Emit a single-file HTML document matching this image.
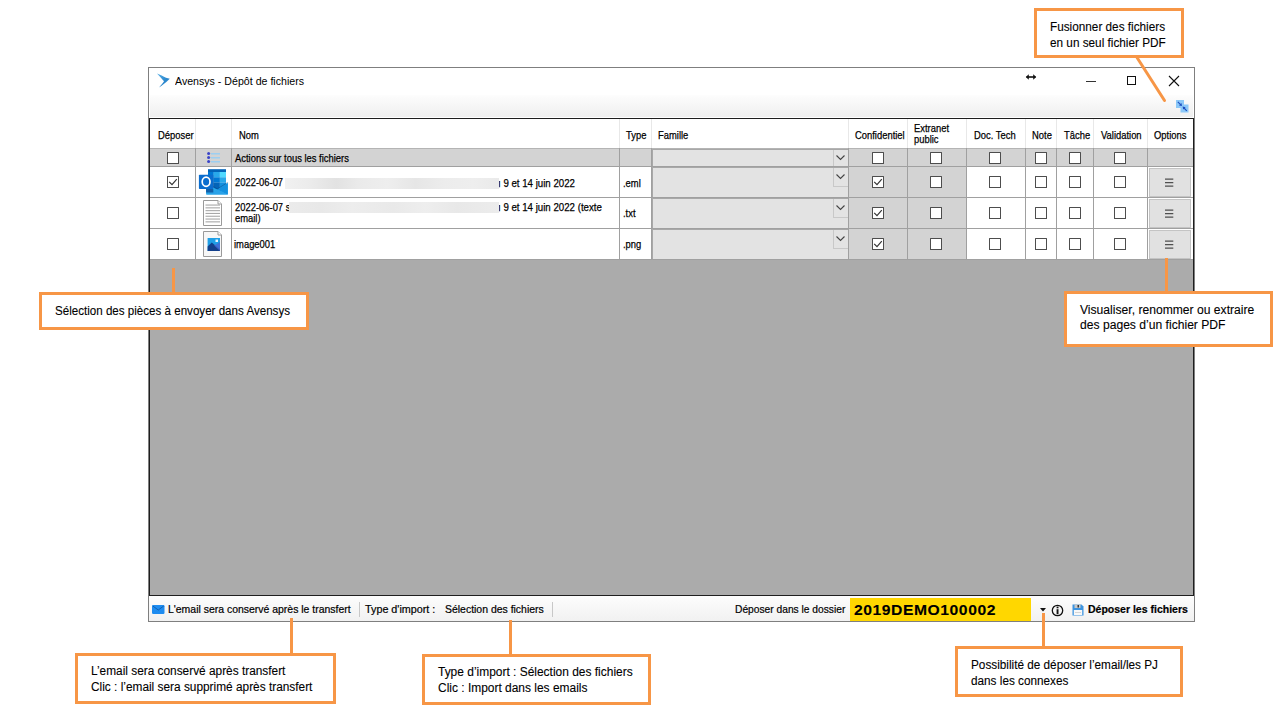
<!DOCTYPE html><html><head><meta charset="utf-8"><style>
*{margin:0;padding:0;box-sizing:border-box}
html,body{width:1279px;height:711px;overflow:hidden;background:#fff;font-family:"Liberation Sans",sans-serif;color:#000}
.ab{position:absolute}
.t{position:absolute;white-space:nowrap;transform-origin:0 0;line-height:1}
.g{font-size:11px;color:#000}
.cb{position:absolute;width:12px;height:12px;border:1px solid #4d4d4d;border-radius:0.5px;background:#fff}
.ob{position:absolute;border:3px solid #f79646;background:#fff}
.ol{position:absolute;background:#f79646}
.an{position:absolute;white-space:nowrap;font-size:12px;line-height:16px;color:#000;-webkit-text-stroke:0.1px #000}
</style></head><body>

<div class="ab" style="left:148px;top:67px;width:1047px;height:555px;border:1px solid #7f7f7f;background:#fff"></div>
<div class="ab" style="left:150px;top:95px;width:1043px;height:22px;background:linear-gradient(#fdfdfd,#efefef)"></div>
<div class="ab" style="left:149px;top:118px;width:1045px;height:478px;border:1px solid #1e1e1e;background:#ababab"></div>
<div class="ab" style="left:150px;top:119px;width:1043px;height:29px;background:#fff"></div>
<div class="ab" style="left:150px;top:148px;width:1043px;height:1px;background:#b4b4b4"></div>
<div class="ab" style="left:150px;top:149px;width:1043px;height:17px;background:#d3d3d3"></div>
<div class="ab" style="left:150px;top:166px;width:1043px;height:1px;background:#a0a0a0"></div>
<div class="ab" style="left:150px;top:167px;width:1043px;height:30px;background:#fff"></div>
<div class="ab" style="left:150px;top:197px;width:1043px;height:1px;background:#a0a0a0"></div>
<div class="ab" style="left:150px;top:198px;width:1043px;height:30px;background:#fff"></div>
<div class="ab" style="left:150px;top:228px;width:1043px;height:1px;background:#a0a0a0"></div>
<div class="ab" style="left:150px;top:229px;width:1043px;height:30px;background:#fff"></div>
<div class="ab" style="left:150px;top:259px;width:1043px;height:1px;background:#a0a0a0"></div>
<div class="ab" style="left:849px;top:167px;width:117px;height:30px;background:#d3d3d3"></div>
<div class="ab" style="left:849px;top:198px;width:117px;height:30px;background:#d3d3d3"></div>
<div class="ab" style="left:849px;top:229px;width:117px;height:30px;background:#d3d3d3"></div>
<div class="ab" style="left:195px;top:119px;width:1px;height:29px;background:#e8e8e8"></div>
<div class="ab" style="left:195px;top:148px;width:1px;height:112px;background:#a0a0a0"></div>
<div class="ab" style="left:231px;top:119px;width:1px;height:29px;background:#e8e8e8"></div>
<div class="ab" style="left:231px;top:148px;width:1px;height:112px;background:#a0a0a0"></div>
<div class="ab" style="left:619px;top:119px;width:1px;height:29px;background:#e8e8e8"></div>
<div class="ab" style="left:619px;top:148px;width:1px;height:112px;background:#a0a0a0"></div>
<div class="ab" style="left:651px;top:119px;width:1px;height:29px;background:#e8e8e8"></div>
<div class="ab" style="left:651px;top:148px;width:1px;height:112px;background:#a0a0a0"></div>
<div class="ab" style="left:848px;top:119px;width:1px;height:29px;background:#e8e8e8"></div>
<div class="ab" style="left:848px;top:148px;width:1px;height:112px;background:#a0a0a0"></div>
<div class="ab" style="left:907px;top:119px;width:1px;height:29px;background:#e8e8e8"></div>
<div class="ab" style="left:907px;top:148px;width:1px;height:112px;background:#a0a0a0"></div>
<div class="ab" style="left:966px;top:119px;width:1px;height:29px;background:#e8e8e8"></div>
<div class="ab" style="left:966px;top:148px;width:1px;height:112px;background:#a0a0a0"></div>
<div class="ab" style="left:1025px;top:119px;width:1px;height:29px;background:#e8e8e8"></div>
<div class="ab" style="left:1025px;top:148px;width:1px;height:112px;background:#a0a0a0"></div>
<div class="ab" style="left:1056px;top:119px;width:1px;height:29px;background:#e8e8e8"></div>
<div class="ab" style="left:1056px;top:148px;width:1px;height:112px;background:#a0a0a0"></div>
<div class="ab" style="left:1093px;top:119px;width:1px;height:29px;background:#e8e8e8"></div>
<div class="ab" style="left:1093px;top:148px;width:1px;height:112px;background:#a0a0a0"></div>
<div class="ab" style="left:1147px;top:119px;width:1px;height:29px;background:#e8e8e8"></div>
<div class="ab" style="left:1147px;top:148px;width:1px;height:112px;background:#a0a0a0"></div>
<div class="ab" style="left:652px;top:149px;width:196px;height:17px;background:#e3e3e3;border-top:1px solid #a8a8a8;border-left:1px solid #a8a8a8"></div>
<div class="ab" style="left:652px;top:167px;width:196px;height:30px;background:#e3e3e3;border-top:1px solid #a8a8a8;border-left:1px solid #a8a8a8"></div>
<div class="ab" style="left:652px;top:198px;width:196px;height:30px;background:#e3e3e3;border-top:1px solid #a8a8a8;border-left:1px solid #a8a8a8"></div>
<div class="ab" style="left:652px;top:229px;width:196px;height:30px;background:#e3e3e3;border-top:1px solid #a8a8a8;border-left:1px solid #a8a8a8"></div>
<div class="t" style="left:158px;top:128.78px;font-size:11.6px;transform:scaleX(0.8107758620689655);-webkit-text-stroke:0.25px #000;">Déposer</div>
<div class="t" style="left:239px;top:128.78px;font-size:11.6px;transform:scaleX(0.8107758620689655);-webkit-text-stroke:0.25px #000;">Nom</div>
<div class="t" style="left:626px;top:128.78px;font-size:11.6px;transform:scaleX(0.8107758620689655);-webkit-text-stroke:0.25px #000;">Type</div>
<div class="t" style="left:658px;top:128.78px;font-size:11.6px;transform:scaleX(0.8107758620689655);-webkit-text-stroke:0.25px #000;">Famille</div>
<div class="t" style="left:855px;top:128.78px;font-size:11.6px;transform:scaleX(0.8107758620689655);-webkit-text-stroke:0.25px #000;">Confidentiel</div>
<div class="t" style="left:914px;top:122.08px;font-size:11.6px;transform:scaleX(0.8107758620689655);-webkit-text-stroke:0.25px #000;">Extranet</div>
<div class="t" style="left:914px;top:133.28px;font-size:11.6px;transform:scaleX(0.8107758620689655);-webkit-text-stroke:0.25px #000;">public</div>
<div class="t" style="left:973.5px;top:128.78px;font-size:11.6px;transform:scaleX(0.8107758620689655);-webkit-text-stroke:0.25px #000;">Doc. Tech</div>
<div class="t" style="left:1032px;top:128.78px;font-size:11.6px;transform:scaleX(0.8107758620689655);-webkit-text-stroke:0.25px #000;">Note</div>
<div class="t" style="left:1064px;top:128.78px;font-size:11.6px;transform:scaleX(0.8107758620689655);-webkit-text-stroke:0.25px #000;">Tâche</div>
<div class="t" style="left:1100.5px;top:128.78px;font-size:11.6px;transform:scaleX(0.8107758620689655);-webkit-text-stroke:0.25px #000;">Validation</div>
<div class="t" style="left:1154px;top:128.78px;font-size:11.6px;transform:scaleX(0.8107758620689655);-webkit-text-stroke:0.25px #000;">Options</div>
<div class="t" style="left:235px;top:152.38px;font-size:11.6px;transform:scaleX(0.8107758620689655);-webkit-text-stroke:0.25px #000;">Actions sur tous les fichiers</div>
<div class="t" style="left:235px;top:176.28px;font-size:11.6px;transform:scaleX(0.8107758620689655);-webkit-text-stroke:0.25px #000;">2022-06-07</div>
<div class="t" style="left:498px;top:176.78px;font-size:11.6px;transform:scaleX(0.8350991379310344);-webkit-text-stroke:0.25px #000;">ı 9 et 14 juin 2022</div>
<div class="t" style="left:235px;top:200.88px;font-size:11.6px;transform:scaleX(0.8107758620689655);-webkit-text-stroke:0.25px #000;">2022-06-07 s</div>
<div class="t" style="left:498px;top:200.88px;font-size:11.6px;transform:scaleX(0.8350991379310344);-webkit-text-stroke:0.25px #000;">ı 9 et 14 juin 2022 (texte</div>
<div class="t" style="left:235px;top:212.28px;font-size:11.6px;transform:scaleX(0.8107758620689655);-webkit-text-stroke:0.25px #000;">email)</div>
<div class="t" style="left:234px;top:238.18px;font-size:11.6px;transform:scaleX(0.8107758620689655);-webkit-text-stroke:0.25px #000;">image001</div>
<div class="t" style="left:623px;top:176.68px;font-size:11.6px;transform:scaleX(0.8107758620689655);-webkit-text-stroke:0.25px #000;">.eml</div>
<div class="t" style="left:623px;top:207.18px;font-size:11.6px;transform:scaleX(0.8107758620689655);-webkit-text-stroke:0.25px #000;">.txt</div>
<div class="t" style="left:623px;top:238.18px;font-size:11.6px;transform:scaleX(0.8107758620689655);-webkit-text-stroke:0.25px #000;">.png</div>
<div class="ab" style="left:285px;top:178px;width:214px;height:11px;background:linear-gradient(90deg,#f1f1f1 0%,#ebebeb 12%,#e2e2e2 24%,#eaeaea 34%,#eeeeee 48%,#e6e6e6 61%,#ececec 74%,#eeeeee 88%,#eaeaea 100%)"></div>
<div class="ab" style="left:289px;top:202px;width:210px;height:11px;background:linear-gradient(90deg,#ebebeb 0%,#e8e8e8 15%,#ededed 30%,#e9e9e9 50%,#eeeeee 65%,#e8e8e8 80%,#ececec 100%)"></div>
<div class="cb" style="left:167px;top:152px"></div>
<div class="cb" style="left:872px;top:152px"></div>
<div class="cb" style="left:930px;top:152px"></div>
<div class="cb" style="left:989px;top:152px"></div>
<div class="cb" style="left:1035px;top:152px"></div>
<div class="cb" style="left:1069px;top:152px"></div>
<div class="cb" style="left:1114px;top:152px"></div>
<div class="cb" style="left:167px;top:176px"><svg width="10" height="10" style="position:absolute;left:0;top:0"><path d="M1.2 4.8 L4 7.6 L8.8 2.2" stroke="#333" stroke-width="1.2" fill="none"/></svg></div>
<div class="cb" style="left:872px;top:176px"><svg width="10" height="10" style="position:absolute;left:0;top:0"><path d="M1.2 4.8 L4 7.6 L8.8 2.2" stroke="#333" stroke-width="1.2" fill="none"/></svg></div>
<div class="cb" style="left:930px;top:176px"></div>
<div class="cb" style="left:989px;top:176px"></div>
<div class="cb" style="left:1035px;top:176px"></div>
<div class="cb" style="left:1069px;top:176px"></div>
<div class="cb" style="left:1114px;top:176px"></div>
<div class="cb" style="left:167px;top:207px"></div>
<div class="cb" style="left:872px;top:207px"><svg width="10" height="10" style="position:absolute;left:0;top:0"><path d="M1.2 4.8 L4 7.6 L8.8 2.2" stroke="#333" stroke-width="1.2" fill="none"/></svg></div>
<div class="cb" style="left:930px;top:207px"></div>
<div class="cb" style="left:989px;top:207px"></div>
<div class="cb" style="left:1035px;top:207px"></div>
<div class="cb" style="left:1069px;top:207px"></div>
<div class="cb" style="left:1114px;top:207px"></div>
<div class="cb" style="left:167px;top:238px"></div>
<div class="cb" style="left:872px;top:238px"><svg width="10" height="10" style="position:absolute;left:0;top:0"><path d="M1.2 4.8 L4 7.6 L8.8 2.2" stroke="#333" stroke-width="1.2" fill="none"/></svg></div>
<div class="cb" style="left:930px;top:238px"></div>
<div class="cb" style="left:989px;top:238px"></div>
<div class="cb" style="left:1035px;top:238px"></div>
<div class="cb" style="left:1069px;top:238px"></div>
<div class="cb" style="left:1114px;top:238px"></div>
<div class="ab" style="left:833px;top:150px;width:15px;height:16px;border-left:1px solid #c8c8c8"></div>
<svg class="ab" style="left:835px;top:154px" width="11" height="8"><path d="M1.5 1.5 L5.5 5.5 L9.5 1.5" stroke="#444" stroke-width="1.1" fill="none"/></svg>
<div class="ab" style="left:833px;top:168px;width:15px;height:19px;border-left:1px solid #c8c8c8;border-bottom:1px solid #c8c8c8"></div>
<svg class="ab" style="left:835px;top:173px" width="11" height="8"><path d="M1.5 1.5 L5.5 5.5 L9.5 1.5" stroke="#444" stroke-width="1.1" fill="none"/></svg>
<div class="ab" style="left:833px;top:199px;width:15px;height:19px;border-left:1px solid #c8c8c8;border-bottom:1px solid #c8c8c8"></div>
<svg class="ab" style="left:835px;top:204px" width="11" height="8"><path d="M1.5 1.5 L5.5 5.5 L9.5 1.5" stroke="#444" stroke-width="1.1" fill="none"/></svg>
<div class="ab" style="left:833px;top:230px;width:15px;height:19px;border-left:1px solid #c8c8c8;border-bottom:1px solid #c8c8c8"></div>
<svg class="ab" style="left:835px;top:235px" width="11" height="8"><path d="M1.5 1.5 L5.5 5.5 L9.5 1.5" stroke="#444" stroke-width="1.1" fill="none"/></svg>
<div class="ab" style="left:1149px;top:168px;width:42px;height:29px;background:#e1e1e1;border:1px solid #c4c4c4"></div>
<svg class="ab" style="left:1165px;top:178px" width="9" height="10"><path d="M0 1.1H8.3M0 4.6H8.3M0 8.1H8.3" stroke="#505050" stroke-width="1.2"/></svg>
<div class="ab" style="left:1149px;top:199px;width:42px;height:29px;background:#e1e1e1;border:1px solid #c4c4c4"></div>
<svg class="ab" style="left:1165px;top:209px" width="9" height="10"><path d="M0 1.1H8.3M0 4.6H8.3M0 8.1H8.3" stroke="#505050" stroke-width="1.2"/></svg>
<div class="ab" style="left:1149px;top:230px;width:42px;height:29px;background:#e1e1e1;border:1px solid #c4c4c4"></div>
<svg class="ab" style="left:1165px;top:240px" width="9" height="10"><path d="M0 1.1H8.3M0 4.6H8.3M0 8.1H8.3" stroke="#505050" stroke-width="1.2"/></svg>
<svg class="ab" style="left:206px;top:151px" width="15" height="13"><circle cx="2.6" cy="2.6" r="1.5" fill="#3a44c8"/><circle cx="2.6" cy="6.6" r="1.5" fill="#3a44c8"/><circle cx="2.6" cy="10.6" r="1.5" fill="#3a44c8"/><rect x="5" y="2" width="9" height="1.5" fill="#9ccff2"/><rect x="5" y="6" width="9" height="1.5" fill="#9ccff2"/><rect x="5" y="10" width="9" height="1.5" fill="#9ccff2"/></svg>
<svg class="ab" style="left:198px;top:168px" width="32" height="28" viewBox="0 0 32 28"><rect x="10" y="1.2" width="18" height="2.9" fill="#0364b8"/><rect x="10" y="4" width="5.8" height="5.4" fill="#0078d4"/><rect x="15.8" y="4" width="6.1" height="5.4" fill="#28a8ea"/><rect x="21.9" y="4" width="6.1" height="5.4" fill="#50d9ff"/><rect x="10" y="9.3" width="5.8" height="5.4" fill="#0364b8"/><rect x="15.8" y="9.3" width="6.1" height="5.4" fill="#0078d4"/><rect x="21.9" y="9.3" width="6.1" height="5.4" fill="#28a8ea"/><rect x="10" y="14.6" width="5.8" height="8" fill="#0a4f94"/><rect x="15.8" y="14.6" width="6.1" height="8" fill="#0364b8"/><rect x="21.9" y="14.6" width="6.1" height="8" fill="#1490df"/><path d="M8.1 16.3 L19.3 21.6 L29.8 15 L29.8 26.6 L8.1 26.6 Z" fill="#28a8ea"/><path d="M19.3 21.6 L29.8 15 L29.8 26.6 Z" fill="#1490df"/><path d="M8.1 26.6 L19.3 21.6 L29.8 26.6 Z" fill="#2aa2e8"/><path d="M12 16.6 L19.3 20.9 L29.8 14.4" stroke="#0a3f7a" stroke-width="0.8" stroke-opacity="0.55" fill="none"/><rect x="8.1" y="21" width="7.2" height="3.5" fill="#125fa8"/><rect x="0.9" y="6.8" width="14.4" height="14.2" rx="0.8" fill="#0b6dce"/><ellipse cx="8.1" cy="13.8" rx="3.9" ry="4.6" fill="none" stroke="#fff" stroke-width="1.7"/></svg>
<svg class="ab" style="left:203px;top:200px" width="20" height="27" viewBox="0 0 20 27"><path d="M0.5 0.5 H15 L18.5 4 V25.5 H0.5 Z" fill="#fff" stroke="#9a9a9a"/><path d="M15 0.5 V4 H18.5" fill="#fff" stroke="#9a9a9a"/><rect x="2.5" y="4.5" width="14.5" height="1.1" fill="#a8a8a8"/><rect x="2.5" y="7.3" width="14.5" height="1.1" fill="#a8a8a8"/><rect x="2.5" y="10.1" width="14.5" height="1.1" fill="#a8a8a8"/><rect x="2.5" y="12.9" width="14.5" height="1.1" fill="#a8a8a8"/><rect x="2.5" y="15.7" width="14.5" height="1.1" fill="#a8a8a8"/><rect x="2.5" y="18.5" width="14.5" height="1.1" fill="#a8a8a8"/><rect x="2.5" y="21.3" width="14.5" height="1.1" fill="#a8a8a8"/></svg>
<svg class="ab" style="left:203px;top:231px" width="20" height="27" viewBox="0 0 20 27"><path d="M0.5 0.5 H15 L18.5 4 V25.5 H0.5 Z" fill="#f7f7f7" stroke="#9a9a9a"/><path d="M15 0.5 V4 H18.5" fill="#fff" stroke="#9a9a9a"/><rect x="4.6" y="7" width="12.4" height="13" fill="#1f9fe6"/><path d="M4.6 20 L4.6 15.5 L8.8 11.5 L17 18.5 L17 20 Z" fill="#123f8a"/><path d="M11 14.5 L17 11 L17 20 Z" fill="#4a62d0" opacity="0.75"/><rect x="12.5" y="8.5" width="2.5" height="2.5" fill="#e6f4ff"/></svg>
<svg class="ab" style="left:156px;top:73px" width="16" height="16" viewBox="0 0 16 16"><defs><linearGradient id="bg1" x1="0" y1="0" x2="1" y2="1"><stop offset="0" stop-color="#56b0e8"/><stop offset="0.6" stop-color="#2a86cc"/><stop offset="1" stop-color="#3a9ae0"/></linearGradient></defs><path d="M1 0.5 C4 1.8 7.5 3.2 10 4.8 L13.8 5.8 L12.2 7.2 C10 9.5 6.5 12 3 14.5 C5 12 6.8 10 8 8.2 C6 6 3.5 3 1 0.5 Z" fill="url(#bg1)"/></svg>
<div class="t" style="left:175px;top:75.69px;font-size:11px;transform:scaleX(0.965);color:#000">Avensys - Dépôt de fichiers</div>
<svg class="ab" style="left:1025px;top:73px" width="12" height="8" viewBox="0 0 12 8"><path d="M1.5 4 H10.5" stroke="#111" stroke-width="1.6"/><path d="M0.8 4 L3.8 1.2 V6.8 Z M11.2 4 L8.2 1.2 V6.8 Z" fill="#111"/></svg>
<div class="ab" style="left:1086px;top:80.5px;width:10px;height:1.2px;background:#333"></div>
<div class="ab" style="left:1127px;top:76px;width:9px;height:9px;border:1px solid #111"></div>
<svg class="ab" style="left:1168px;top:75px" width="12" height="12" viewBox="0 0 12 12"><path d="M1 1 L11 11 M11 1 L1 11" stroke="#111" stroke-width="1.1"/></svg>
<svg class="ab" style="left:1176px;top:99.5px" width="14" height="14" viewBox="0 0 14 14"><rect x="0" y="0" width="8" height="8" fill="#8cc8f8"/><rect x="4.5" y="4.5" width="8" height="8" fill="#8cc8f8"/><path d="M1.8 1.8 L4.6 4.6" stroke="#1a4cc0" stroke-width="1.1"/><path d="M6 6 L3 5.4 L5.4 3 Z" fill="#1a4cc0"/><path d="M10.8 10.8 L8 8" stroke="#1a4cc0" stroke-width="1.1"/><path d="M6.6 6.6 L9.6 7.2 L7.2 9.6 Z" fill="#1a4cc0"/></svg>
<div class="ab" style="left:149px;top:596px;width:1045px;height:25px;background:linear-gradient(#fdfdfd,#f1f1f1)"></div>
<svg class="ab" style="left:152px;top:605px" width="13" height="9" viewBox="0 0 13 9"><rect x="0" y="0" width="12.5" height="9" rx="1.2" fill="#1e8cf0"/><path d="M0.8 1 L6.25 5 L11.7 1" stroke="#1160b0" stroke-width="1" fill="none"/></svg>
<div class="t" style="left:168px;top:604.09px;font-size:11px;transform:scaleX(0.95);-webkit-text-stroke:0.2px #000;color:#000">L'email sera conservé après le transfert</div>
<div class="ab" style="left:359px;top:602px;width:1px;height:15px;background:#c8c8c8"></div>
<div class="t" style="left:365px;top:604.09px;font-size:11px;transform:scaleX(0.98);-webkit-text-stroke:0.2px #000;color:#000">Type d'import :</div>
<div class="t" style="left:444.5px;top:604.09px;font-size:11px;transform:scaleX(0.95);-webkit-text-stroke:0.2px #000;color:#000">Sélection des fichiers</div>
<div class="ab" style="left:552px;top:602px;width:1px;height:15px;background:#c8c8c8"></div>
<div class="t" style="left:734.5px;top:604.09px;font-size:11px;transform:scaleX(0.93);-webkit-text-stroke:0.2px #000;color:#000">Déposer dans le dossier</div>
<div class="ab" style="left:850px;top:598px;width:181px;height:23px;background:#ffd700"></div>
<div class="t" style="left:853.5px;top:602.9797px;font-size:14.2px;transform:scaleX(1.105);font-weight:bold;letter-spacing:0.5px;color:#000;-webkit-text-stroke:0.1px #000">2019DEMO100002</div>
<svg class="ab" style="left:1040px;top:608px" width="6" height="4"><path d="M0 0 H6 L3 3.5 Z" fill="#111"/></svg>
<svg class="ab" style="left:1051px;top:603.5px" width="13" height="13" viewBox="0 0 13 13"><circle cx="6.5" cy="6.5" r="5.2" fill="none" stroke="#111" stroke-width="1.3"/><rect x="5.6" y="5.2" width="1.9" height="5" fill="#111"/><rect x="5.6" y="2.6" width="1.9" height="1.7" fill="#111"/></svg>
<svg class="ab" style="left:1072px;top:604px" width="12" height="12" viewBox="0 0 12 12"><path d="M0.5 0.5 H9.5 L11.5 2.5 V11.5 H0.5 Z" fill="#3d94e0"/><rect x="2.5" y="0.5" width="6" height="3.5" fill="#c8c8c8"/><rect x="5.5" y="1" width="1.5" height="2.5" fill="#333"/><rect x="1.8" y="6" width="8.4" height="5" fill="#f8f8f8"/><rect x="3" y="8" width="6" height="0.8" fill="#ccc"/></svg>
<div class="t" style="left:1087.5px;top:604.09px;font-size:11px;transform:scaleX(0.955);font-weight:bold;color:#000;-webkit-text-stroke:0.2px #000">Déposer les fichiers</div>
<div class="ob" style="left:1034px;top:8px;width:150px;height:50px"></div>
<div class="an" style="left:1050.3px;top:18.74px;line-height:16px;transform:scaleX(0.98);transform-origin:0 0">Fusionner des fichiers<br>en un seul fichier PDF</div>
<div class="ob" style="left:39px;top:292px;width:270px;height:38px"></div>
<div class="an" style="left:55px;top:302.59px;line-height:16px;transform:scaleX(0.966);transform-origin:0 0">Sélection des pièces à envoyer dans Avensys</div>
<div class="ob" style="left:1064px;top:291px;width:209px;height:56px"></div>
<div class="an" style="left:1080.4px;top:303.04px;line-height:15px;transform:scaleX(1.01);transform-origin:0 0">Visualiser, renommer ou extraire<br>des pages d’un fichier PDF</div>
<div class="ob" style="left:75px;top:653px;width:261px;height:51px"></div>
<div class="an" style="left:90.5px;top:663.24px;line-height:16px;transform:scaleX(0.988);transform-origin:0 0">L’email sera conservé après transfert<br>Clic : l’email sera supprimé après transfert</div>
<div class="ob" style="left:422px;top:654px;width:229px;height:51px"></div>
<div class="an" style="left:438px;top:664.24px;line-height:16px;transform:scaleX(0.996);transform-origin:0 0">Type d’import : Sélection des fichiers<br>Clic : Import dans les emails</div>
<div class="ob" style="left:955px;top:646px;width:228px;height:51px"></div>
<div class="an" style="left:971.2px;top:656.84px;line-height:16px;transform:scaleX(0.98);transform-origin:0 0">Possibilité de déposer l’email/les PJ<br>dans les connexes</div>
<div class="ab" style="left:172px;top:268px;width:3px;height:24px;background:#f79646"></div>
<div class="ab" style="left:290px;top:618px;width:3px;height:35px;background:#f79646"></div>
<div class="ab" style="left:509px;top:620px;width:3px;height:34px;background:#f79646"></div>
<div class="ab" style="left:1042px;top:613px;width:3px;height:33px;background:#f79646"></div>
<div class="ab" style="left:1165px;top:258px;width:3px;height:33px;background:#f79646"></div>
<svg class="ab" style="left:0;top:0" width="1279" height="120"><path d="M1137 57.5 L1164.5 100.5" stroke="#f79646" stroke-width="3" stroke-linecap="round"/></svg>
</body></html>
